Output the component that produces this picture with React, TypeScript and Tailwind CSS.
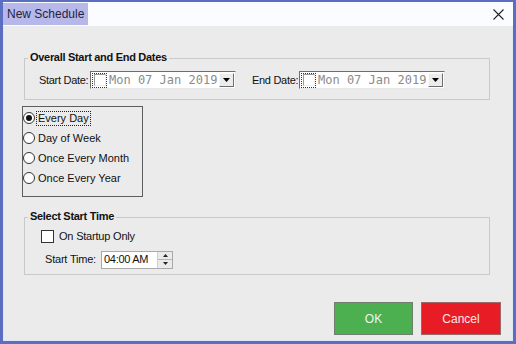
import React from "react";

const ui = { fontFamily: '"Liberation Sans", Arial, sans-serif' };
const mono = { fontFamily: '"DejaVu Sans Mono", "Liberation Mono", monospace' };

function DatePicker() {
  return (
    <div className="flex h-[18px] w-[146px] items-center border border-t-[#6e6e6e] border-l-[#6e6e6e] border-b-[#e8e8e8] border-r-[#e8e8e8] bg-white">
      <div className="ml-[1px] flex h-[15px] w-[15px] items-center justify-center border border-dotted border-[#333]">
        <div className="h-[12px] w-[12px] border border-t-[#9a9a9a] border-l-[#9a9a9a] border-b-[#f0f0f0] border-r-[#f0f0f0] bg-white" />
      </div>
      <span className="ml-[2px] flex-1 text-[12px] leading-[14px] text-[#8c8c8c]" style={mono}>
        Mon 07 Jan 2019
      </span>
      <div className="mr-[1px] flex h-[14px] w-[15px] items-center justify-center border border-t-[#fafafa] border-l-[#fafafa] border-b-[#6e6e6e] border-r-[#6e6e6e] bg-[#ececec]">
        <svg width="7" height="4" viewBox="0 0 7 4">
          <path d="M0 0 H7 L3.5 4 Z" fill="#000" />
        </svg>
      </div>
    </div>
  );
}

function Radio({ label, checked, focus }: { label: string; checked?: boolean; focus?: boolean }) {
  return (
    <div className="flex h-[20px] items-center">
      <div className="flex h-[12px] w-[12px] items-center justify-center rounded-full border border-[#333] bg-white">
        {checked && <div className="h-[6px] w-[6px] rounded-full bg-[#111]" />}
      </div>
      <span
        className={
          "ml-[1px] px-[1px] text-[11px] leading-[13px] text-[#111] " +
          (focus ? "border border-dotted border-[#222]" : "border border-transparent")
        }
      >
        {label}
      </span>
    </div>
  );
}

export default function App() {
  return (
    <div
      className="flex h-[344px] w-[516px] flex-col bg-[#5b6ec2] px-[3px] pb-[3px] pt-[2px]"
      style={ui}
    >
      {/* title bar */}
      <div className="flex h-[24px] items-stretch bg-[#fbfcff] py-[1px]">
        <div className="flex w-[85px] items-center bg-[#b7b8ea] pl-[4px] text-[12px] text-[#1f2340]">
          New Schedule
        </div>
        <div className="flex-1" />
        <div className="flex w-[30px] items-center justify-start pl-[10px]">
          <svg width="11" height="11" viewBox="0 0 11 11">
            <path d="M0.5 0.5 L10.5 10.5 M10.5 0.5 L0.5 10.5" stroke="#222" strokeWidth="1.1" />
          </svg>
        </div>
      </div>

      {/* body */}
      <div className="flex flex-1 flex-col border-l border-b border-r border-[#dfe6f6] bg-[#ebebeb]">
        {/* group 1 */}
        <div className="relative ml-[20px] mt-[32px] h-[42px] w-[466px] border border-[#c9c9c9]">
          <span className="absolute left-[3px] top-[-9px] bg-[#ebebeb] px-[2px] text-[11px] font-bold leading-[14px] tracking-[-0.3px] text-[#111]">
            Overall Start and End Dates
          </span>
          <div className="mt-[12px] flex items-center">
            <span className="ml-[14px] w-[51px] text-[11px] tracking-[-0.3px] text-[#111]">Start Date:</span>
            <DatePicker />
            <span className="ml-[16px] w-[47px] text-[11px] tracking-[-0.3px] text-[#111]">End Date:</span>
            <DatePicker />
          </div>
        </div>

        {/* radio box */}
        <div className="ml-[18px] mt-[6px] flex h-[91px] w-[121px] flex-col border border-[#5e5e5e] pt-[1px]">
          <Radio label="Every Day" checked focus />
          <Radio label="Day of Week" />
          <Radio label="Once Every Month" />
          <Radio label="Once Every Year" />
        </div>

        {/* group 2 */}
        <div className="relative ml-[20px] mt-[20px] h-[58px] w-[466px] border border-[#c9c9c9]">
          <span className="absolute left-[3px] top-[-9px] bg-[#ebebeb] px-[2px] text-[11px] font-bold leading-[14px] tracking-[-0.3px] text-[#111]">
            Select Start Time
          </span>
          <div className="ml-[16px] mt-[10px] flex items-center">
            <div className="h-[13px] w-[13px] border border-[#333] bg-white" />
            <span className="ml-[5px] text-[11px] tracking-[-0.2px] text-[#111]">On Startup Only</span>
          </div>
          <div className="ml-[20px] mt-[6px] flex items-center">
            <span className="w-[56px] text-[11px] tracking-[-0.2px] text-[#111]">Start Time:</span>
            <div className="flex h-[18px] items-stretch border border-[#a9a9a9] bg-white">
              <span className="flex w-[55px] items-center pl-[2px] text-[11px] tracking-[-0.3px] text-[#111]">
                04:00 AM
              </span>
              <div className="flex w-[15px] flex-col border-l border-[#d0d0d0] bg-[#eaeaea]">
                <div className="flex flex-1 items-center justify-center border-b border-[#b5b5b5]">
                  <svg width="5" height="3" viewBox="0 0 5 3">
                    <path d="M0 3 H5 L2.5 0 Z" fill="#222" />
                  </svg>
                </div>
                <div className="flex flex-1 items-center justify-center">
                  <svg width="5" height="3" viewBox="0 0 5 3">
                    <path d="M0 0 H5 L2.5 3 Z" fill="#222" />
                  </svg>
                </div>
              </div>
            </div>
          </div>
        </div>

        {/* buttons */}
        <div className="mr-[11px] mt-[27px] flex justify-end gap-[8px]">
          <button className="flex h-[33px] w-[79px] items-center justify-center border border-[#6f7f6f] bg-[#4caf50] text-[12px] text-[#eef8ee]">
            OK
          </button>
          <button className="flex h-[33px] w-[80px] items-center justify-center border border-[#9a6a6a] bg-[#e81c24] text-[12px] text-[#fde8e8]">
            Cancel
          </button>
        </div>
      </div>
    </div>
  );
}
